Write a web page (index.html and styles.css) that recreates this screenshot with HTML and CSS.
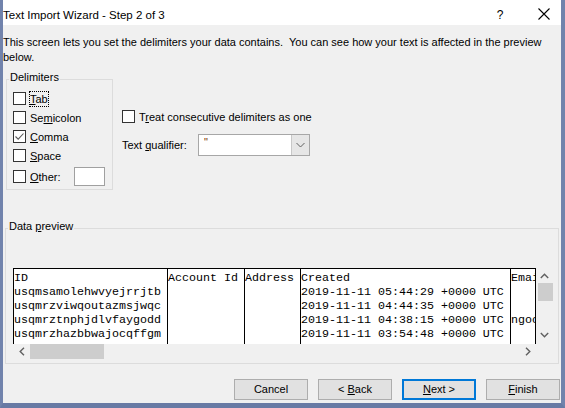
FILE: index.html
```html
<!DOCTYPE html>
<html>
<head>
<meta charset="utf-8">
<link rel="stylesheet" href="styles.css">
</head>
<body>
<div class="window">
  <div class="titlebar">
    <span class="title">Text Import Wizard - Step 2 of 3</span>
    <span class="help">?</span>
    <span class="close"><svg width="12" height="12" viewBox="0 0 12 12"><path d="M0.5 0.5 L11.5 11.5 M11.5 0.5 L0.5 11.5" stroke="#000" stroke-width="1.1" fill="none"/></svg></span>
  </div>
  <div class="body">
    <p class="desc">This screen lets you set the delimiters your data contains.&nbsp; You can see how your text is affected in the preview<br>below.</p>
    <div class="options">
      <fieldset class="group delims">
        <legend>Delimiters</legend>
        <div class="cb-row"><span class="box"></span><span class="lbl focus"><u>T</u>ab</span></div>
        <div class="cb-row"><span class="box"></span><span class="lbl">Se<u>m</u>icolon</span></div>
        <div class="cb-row"><span class="box"><svg width="11" height="11" viewBox="0 0 11 11"><polyline points="1.5,5.5 4.2,8.2 9.5,2.5" stroke="#5a5a5a" stroke-width="1.1" fill="none"/></svg></span><span class="lbl"><u>C</u>omma</span></div>
        <div class="cb-row"><span class="box"></span><span class="lbl"><u>S</u>pace</span></div>
        <div class="cb-row other"><span class="box"></span><span class="lbl other-lbl"><u>O</u>ther:</span><span class="field"></span></div>
      </fieldset>
      <div class="right-opts">
        <div class="cb-row treat"><span class="box"></span><span class="lbl">T<u>r</u>eat consecutive delimiters as one</span></div>
        <div class="qualifier">
          <span class="q-lbl">Text <u>q</u>ualifier:</span>
          <div class="combo">
            <span class="combo-val">"</span>
            <span class="combo-btn"><svg width="9" height="6" viewBox="0 0 9 6"><polyline points="0.5,1 4.5,5 8.5,1" stroke="#606060" stroke-width="1" fill="none"/></svg></span>
          </div>
        </div>
      </div>
    </div>
    <fieldset class="group preview">
      <legend>Data <u>p</u>review</legend>
      <div class="scrollbox">
        <div class="table">
          <div class="col c-id"><div>ID</div><div>usqmsamolehwvyejrrjtb</div><div>usqmrzviwqoutazmsjwqc</div><div>usqmrztnphjdlvfaygodd</div><div>usqmrzhazbbwajocqffgm</div></div>
          <div class="col c-acc"><div>Account Id</div></div>
          <div class="col c-addr"><div>Address</div></div>
          <div class="col c-created"><div>Created</div><div>2019-11-11 05:44:29 +0000 UTC</div><div>2019-11-11 04:44:35 +0000 UTC</div><div>2019-11-11 04:38:15 +0000 UTC</div><div>2019-11-11 03:54:48 +0000 UTC</div></div>
          <div class="col c-email"><div>Email</div><div>&nbsp;</div><div>&nbsp;</div><div>ngoodwin@example.com</div><div>&nbsp;</div></div>
        </div>
        <div class="vscroll">
          <span class="arrow up"><svg width="9" height="6" viewBox="0 0 9 6"><polyline points="0.8,5 4.5,1.2 8.2,5" stroke="#606060" stroke-width="1.4" fill="none"/></svg></span>
          <span class="vthumb"></span>
          <span class="arrow down"><svg width="9" height="6" viewBox="0 0 9 6"><polyline points="0.8,1 4.5,4.8 8.2,1" stroke="#606060" stroke-width="1.4" fill="none"/></svg></span>
        </div>
        <div class="hscroll">
          <span class="arrow left"><svg width="6" height="9" viewBox="0 0 6 9"><polyline points="5,0.8 1.2,4.5 5,8.2" stroke="#606060" stroke-width="1.4" fill="none"/></svg></span>
          <span class="hthumb"></span>
          <span class="arrow right"><svg width="6" height="9" viewBox="0 0 6 9"><polyline points="1,0.8 4.8,4.5 1,8.2" stroke="#606060" stroke-width="1.4" fill="none"/></svg></span>
        </div>
        <div class="corner"></div>
      </div>
    </fieldset>
    <div class="buttons">
      <button class="btn">Cancel</button>
      <button class="btn">&lt; <u>B</u>ack</button>
      <button class="btn default"><u>N</u>ext &gt;</button>
      <button class="btn"><u>F</u>inish</button>
    </div>
  </div>
</div>
</body>
</html>
```
FILE: styles.css
```css
* { box-sizing: border-box; }
html, body { margin: 0; padding: 0; }
body {
  width: 565px;
  height: 408px;
  overflow: hidden;
  font-family: "Liberation Sans", Arial, sans-serif;
  font-size: 11px;
  color: #000;
  background: #f0f0f0;
}
u { text-decoration: underline; text-underline-offset: 1px; }

.window {
  width: 565px;
  height: 408px;
  display: flex;
  flex-direction: column;
  background: #f0f0f0;
  border-left: 3px solid #7183ac;
  border-right: 4px solid #7183ac;
  border-bottom: 5px solid #687aa4;
}

.titlebar {
  flex: none;
  height: 25px;
  padding-top: 5px;
  background: #fff;
  display: flex;
  align-items: center;
}
.title { flex: 1; font-size: 11.5px; }
.help { width: 44px; text-align: center; font-size: 12px; margin-top: -1px; }
.close { width: 34px; margin-left: 5px; display: flex; justify-content: center; margin-top: -3px; }
.close svg { display: block; }

.body { flex: 1; display: flex; flex-direction: column; }

.desc { margin: 10px 0 0; line-height: 15px; white-space: nowrap; }

.options { display: flex; align-items: flex-start; margin-top: 6px; }

.group {
  border: 1px solid #dcdcdc;
  margin: 0;
  min-width: 0;
}
.group legend {
  padding: 0 1px 4px;
  line-height: 13px;
  font-size: 11px;
}

.delims {
  margin-left: 3px;
  width: 107px;
  padding: 1px 0 3px 6px;
}
.delims legend { margin-left: -4px; }

.cb-row { display: flex; align-items: center; height: 19px; }
.box {
  flex: none;
  width: 13px;
  height: 13px;
  border: 1px solid #333;
  background: #fff;
  margin-right: 4px;
  display: flex;
  align-items: center;
  justify-content: center;
}
.box svg { display: block; }
.lbl { line-height: 14px; white-space: nowrap; }
.focus { outline: 1px dotted #000; outline-offset: 0; }
.other { margin-top: 2px; }
.other-lbl { width: 44px; flex: none; }
.field { width: 31px; height: 19px; border: 1px solid #a0a0a0; background: #fff; flex: none; }

.right-opts { margin-left: 9px; }
.treat { margin-top: 36px; }
.qualifier { display: flex; align-items: center; margin-top: 8px; }
.q-lbl { width: 76px; flex: none; }
.combo {
  width: 112px;
  height: 22px;
  border: 1px solid #a7a7a7;
  background: #fff;
  display: flex;
}
.combo-val { padding: 1px 0 0 5px; line-height: 12px; font-size: 11px; color: #7a3300; }
.combo-btn {
  margin-left: auto;
  width: 18px;
  background: #e6e6e6;
  border-left: 1px solid #c8c8c8;
  display: flex;
  align-items: center;
  justify-content: center;
}

.preview {
  margin: 30px 2px 0 2px;
  padding: 31px 5px 3px 7px;
}
.preview legend { margin-left: -5px; }

.scrollbox {
  display: grid;
  grid-template-columns: 523px 17px;
  grid-template-rows: 76px 16px;
  width: 540px;
}
.table {
  background: #fff;
  border: 1px solid #000;
  border-bottom: none;
  display: flex;
  overflow: hidden;
  font-family: "Liberation Mono", "Courier New", monospace;
  font-size: 11.67px;
  line-height: 14px;
}
.col { flex: none; overflow: hidden; padding-top: 2px; }
.col > div { white-space: pre; height: 14px; }
.col + .col { border-left: 1px solid #000; }
.c-id { width: 153px; }
.c-acc { width: 77px; }
.c-addr { width: 56px; }
.c-created { width: 210px; }
.c-email { flex: 1; min-width: 0; }

.vscroll {
  background: #f0f0f0;
  display: flex;
  flex-direction: column;
  align-items: center;
}
.arrow { display: flex; align-items: center; justify-content: center; flex: none; }
.arrow svg { display: block; }
.vscroll .up { height: 15px; width: 17px; }
.vthumb { width: 15px; height: 18px; background: #cdcdcd; flex: none; margin-left: 1px; }
.vscroll .down { height: 19px; width: 17px; margin-top: auto; }

.hscroll { background: #f0f0f0; display: flex; align-items: flex-start; }
.hscroll .left { width: 17px; height: 15px; }
.hthumb { width: 74px; height: 15px; background: #cdcdcd; flex: none; }
.hscroll .right { width: 17px; height: 15px; margin-left: auto; }
.corner { background: #f0f0f0; }

.buttons {
  display: flex;
  justify-content: flex-end;
  gap: 10px;
  margin-top: 15px;
  padding-right: 1px;
}
.btn {
  width: 74px;
  height: 21px;
  padding: 0;
  margin: 0;
  background: #e1e1e1;
  border: 1px solid #adadad;
  font-family: "Liberation Sans", Arial, sans-serif;
  font-size: 11px;
  color: #000;
  line-height: 17px;
}
.btn.default { border: 2px solid #0078d7; }
```
